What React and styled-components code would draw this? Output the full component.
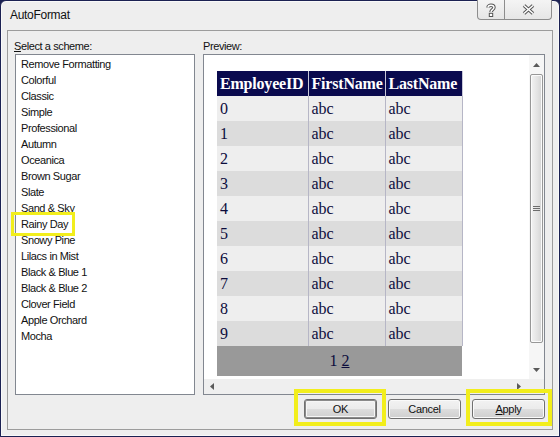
import styled, { createGlobalStyle } from 'styled-components'

const Global = createGlobalStyle`
  html, body { margin: 0; padding: 0; background: #1b2152; }
  body { font-family: "Liberation Sans", Arial, sans-serif; }
`

const Window = styled.div`
  width: 560px;
  height: 437px;
  box-sizing: border-box;
  border: 1px solid #1b2152;
  border-radius: 6px 6px 0 0;
  background: #eeeeee;
  box-shadow: inset 0 0 0 1px #f9f9f9;
  display: flex;
  flex-direction: column;
`

const TitleBar = styled.div`
  height: 29px;
  flex: none;
  display: flex;
  justify-content: space-between;
  align-items: flex-start;
  padding-left: 9px;
`

const Title = styled.div`
  font-size: 12px;
  letter-spacing: -0.3px;
  line-height: 29px;
  color: #111;
`

const Caption = styled.div`
  display: flex;
  margin-right: 7px;
  margin-top: -1px;
`

const CaptionBtn = styled.div`
  width: ${p => p.w}px;
  height: 20px;
  box-sizing: border-box;
  border: 1px solid #8d8d8d;
  border-top: none;
  border-left-width: ${p => (p.first ? 1 : 0)}px;
  border-radius: ${p => (p.first ? '0 0 0 4px' : '0 0 4px 0')};
  background: linear-gradient(#f4f4f4, #e6e6e6);
  display: flex;
  align-items: center;
  justify-content: center;
`

const Client = styled.div`
  flex: 1;
  margin: 0 6px 6px 6px;
  border: 1px solid #9c9c9c;
  padding: 8px 7px 10px 7px;
  display: grid;
  grid-template-columns: 180px 1fr;
  grid-template-rows: 15px 341px 24px;
  column-gap: 8px;
`

const Label = styled.div`
  font-size: 11px;
  letter-spacing: -0.4px;
  color: #111;
  line-height: 14px;
  margin-left: ${p => p.offset || 0}px;
  u { text-decoration: underline; }
`

const ListBox = styled.div`
  border: 1px solid #828790;
  background: #fff;
  padding-top: 1px;
`

const Item = styled.div`
  font-size: 11px;
  letter-spacing: -0.4px;
  line-height: 16px;
  padding-left: 5px;
  color: #111;
`

const ItemText = styled.span`
  position: relative;
  display: inline-block;
  ${p =>
    p.marked &&
    `
    &::after {
      content: '';
      position: absolute;
      top: -4px; bottom: -4px; left: -10px; right: -7px;
      border: 3px solid #f2ee1c;
    }
  `}
`

const PreviewBox = styled.div`
  border: 1px solid #828790;
  background: #fff;
  display: grid;
  grid-template-columns: 1fr 15px;
  grid-template-rows: 1fr 15px;
  overflow: hidden;
`

const Content = styled.div`
  padding: 16px 0 0 13px;
  overflow: hidden;
`

const VScroll = styled.div`
  background: #f6f6f6;
  display: flex;
  flex-direction: column;
  align-items: center;
`

const Arrow = styled.div`
  height: 19px;
  width: 15px;
  flex: none;
  display: flex;
  align-items: center;
  justify-content: center;
`

const Thumb = styled.div`
  width: 13px;
  height: 269px;
  box-sizing: border-box;
  border: 1px solid #979797;
  border-radius: 2px;
  background: linear-gradient(90deg, #f3f3f3, #e2e2e2 60%, #d4d4d4);
  box-shadow: inset 0 0 0 1px #fbfbfb;
  display: flex;
  align-items: center;
  justify-content: center;
`

const Spacer = styled.div`
  flex: 1;
`

const HScroll = styled.div`
  background: #efefef;
  display: flex;
  justify-content: space-between;
  align-items: center;
  padding: 0 8px 0 6px;
`

const Corner = styled.div`
  background: #efefef;
`

const Grid = styled.table`
  border-collapse: collapse;
  table-layout: fixed;
  font-family: "Liberation Serif", "Times New Roman", serif;
  font-size: 16px;
  color: #0c0c3c;
  width: 245px;
  th, td {
    padding: 0 3px;
    text-align: left;
    border-left: 1px solid #b6b6c6;
    border-right: 1px solid #b6b6c6;
    white-space: nowrap;
    overflow: visible;
  }
  th:first-child, td:first-child { border-left: none; }
`

const HeadRow = styled.tr`
  height: 25px;
  background: #0a0a4e;
  color: #fff;
  th { font-weight: bold; border-color: #c8c8d8; letter-spacing: -0.2px; }
`

const Row = styled.tr`
  height: 25px;
  background: ${p => (p.alt ? '#dcdcdc' : '#eeeeee')};
`

const PagerRow = styled.tr`
  height: 30px;
  background: #999999;
  td { text-align: center; border: none; }
  a { color: inherit; text-decoration: underline; }
`

const Buttons = styled.div`
  grid-column: 1 / -1;
  display: flex;
  justify-content: flex-end;
  align-items: flex-end;
  gap: 11px;
`

const Button = styled.div`
  position: relative;
  width: 73px;
  height: 20px;
  box-sizing: border-box;
  border: 1px solid #707070;
  border-radius: 3px;
  background: linear-gradient(#f2f2f2 0%, #ebebeb 50%, #dddddd 51%, #cfcfcf 100%);
  box-shadow: ${p =>
    p.primary ? 'inset 0 0 0 1px #8a8a8a, inset 0 0 0 2px #f6f6f6' : 'inset 0 0 0 1px #fafafa'};
  font-size: 11px;
  letter-spacing: -0.3px;
  color: #111;
  display: flex;
  align-items: center;
  justify-content: center;
  u { text-decoration: underline; }
  ${p =>
    p.mark &&
    `
    &::after {
      content: '';
      position: absolute;
      top: -11px; bottom: -8px;
      left: ${p.mark[0]}px; right: ${p.mark[1]}px;
      border: 4px solid #f2ee1c;
    }
  `}
`

const schemes = [
  'Remove Formatting', 'Colorful', 'Classic', 'Simple', 'Professional', 'Autumn',
  'Oceanica', 'Brown Sugar', 'Slate', 'Sand & Sky', 'Rainy Day', 'Snowy Pine',
  'Lilacs in Mist', 'Black & Blue 1', 'Black & Blue 2', 'Clover Field',
  'Apple Orchard', 'Mocha',
]

const Tri = ({ dir }) => {
  const pts = {
    up: '0,4 3.5,0 7,4',
    down: '0,0 3.5,4 7,0',
    left: '4,0 0,3.5 4,7',
    right: '0,0 4,3.5 0,7',
  }[dir]
  const v = dir === 'up' || dir === 'down'
  return (
    <svg width={v ? 7 : 4} height={v ? 4 : 7}>
      <polygon points={pts} fill="#5a5a5a" />
    </svg>
  )
}

const App = () => {
  const rows = Array.from({ length: 10 }, (_, i) => i)
  return (
    <>
      <Global />
      <Window>
        <TitleBar>
          <Title>AutoFormat</Title>
          <Caption>
            <CaptionBtn w={28} first>
              <svg width="10" height="14" viewBox="0 0 10 14">
                <path d="M2 4.5 C2 1.5 8 1.5 8 4.5 C8 6.5 5 6.8 5 9" fill="none" stroke="#555" strokeWidth="3.4" />
                <path d="M2 4.5 C2 1.5 8 1.5 8 4.5 C8 6.5 5 6.8 5 9" fill="none" stroke="#fff" strokeWidth="1.4" />
                <rect x="3.3" y="10.3" width="3.4" height="3.2" fill="#fff" stroke="#555" strokeWidth="1" />
              </svg>
            </CaptionBtn>
            <CaptionBtn w={47}>
              <svg width="13" height="11" viewBox="0 0 13 11">
                <path d="M2 1.5 L11 9.5 M11 1.5 L2 9.5" stroke="#555" strokeWidth="3.6" />
                <path d="M2 1.5 L11 9.5 M11 1.5 L2 9.5" stroke="#fff" strokeWidth="1.6" />
              </svg>
            </CaptionBtn>
          </Caption>
        </TitleBar>
        <Client>
          <Label offset={-1}><u>S</u>elect a scheme:</Label>
          <Label>Preview:</Label>
          <ListBox>
            {schemes.map(s => (
              <Item key={s}>
                <ItemText marked={s === 'Rainy Day'}>{s}</ItemText>
              </Item>
            ))}
          </ListBox>
          <PreviewBox>
            <Content>
              <Grid>
                <colgroup>
                  <col style={{ width: 91 }} />
                  <col style={{ width: 77 }} />
                  <col style={{ width: 77 }} />
                </colgroup>
                <thead>
                  <HeadRow>
                    <th>EmployeeID</th>
                    <th>FirstName</th>
                    <th>LastName</th>
                  </HeadRow>
                </thead>
                <tbody>
                  {rows.map(i => (
                    <Row key={i} alt={i % 2 === 1}>
                      <td>{i}</td>
                      <td>abc</td>
                      <td>abc</td>
                    </Row>
                  ))}
                  <PagerRow>
                    <td colSpan={3}>
                      <span>1</span> <a>2</a>
                    </td>
                  </PagerRow>
                </tbody>
              </Grid>
            </Content>
            <VScroll>
              <Arrow><Tri dir="up" /></Arrow>
              <Thumb>
                <svg width="7" height="7">
                  <path d="M0 1.5 H7 M0 3.5 H7 M0 5.5 H7" stroke="#6d6d6d" strokeWidth="1" />
                </svg>
              </Thumb>
              <Spacer />
              <Arrow><Tri dir="down" /></Arrow>
            </VScroll>
            <HScroll>
              <Tri dir="left" />
              <Tri dir="right" />
            </HScroll>
            <Corner />
          </PreviewBox>
          <Buttons>
            <Button primary mark={[-11, -10]}>OK</Button>
            <Button>Cancel</Button>
            <Button mark={[-7, -8]}><u>A</u>pply</Button>
          </Buttons>
        </Client>
      </Window>
    </>
  )
}

export default App
